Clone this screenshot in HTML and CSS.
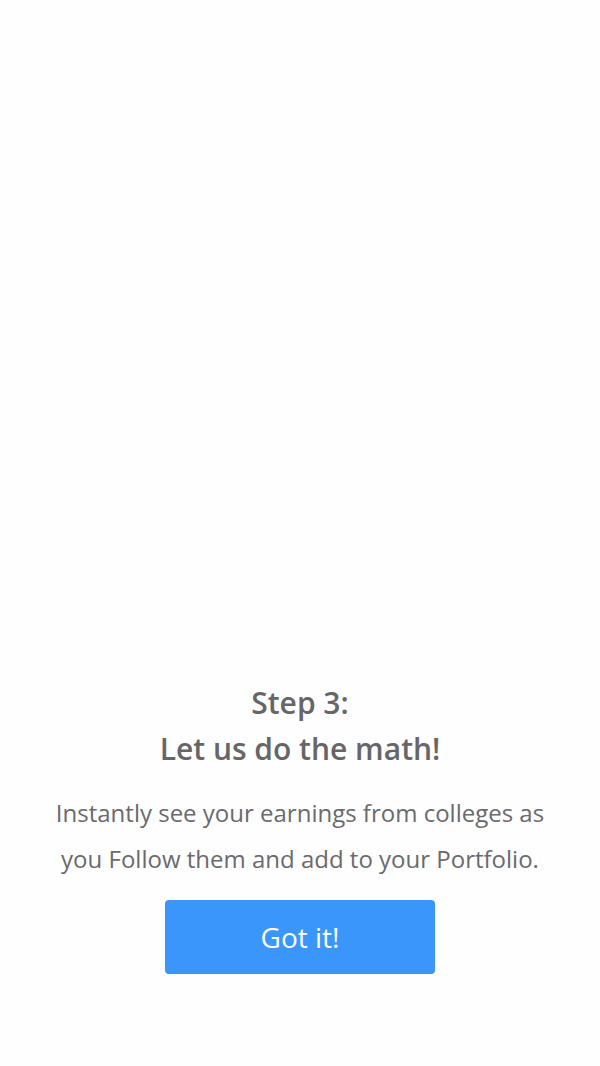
FILE: index.html
```html
<!DOCTYPE html>
<html>
<head>
<meta charset="utf-8">
<link rel="stylesheet" href="styles.css">
</head>
<body>
<main class="screen">
  <section class="card">
    <h1 class="title">Step 3:<br>Let us do the math!</h1>
    <p class="desc">Instantly see your earnings from colleges as you Follow them and add to your Portfolio.</p>
    <button class="btn">Got it!</button>
  </section>
</main>
</body>
</html>
```
FILE: styles.css
```css
html, body {
  margin: 0;
  padding: 0;
  background: #fefefe;
}
.screen {
  width: 600px;
  height: 1066px;
  display: flex;
  flex-direction: column;
  justify-content: flex-end;
  align-items: center;
}
.card {
  display: flex;
  flex-direction: column;
  align-items: center;
  padding-bottom: 92px;
}
.title {
  margin: 0;
  font-family: "Open Sans", sans-serif;
  font-weight: 600;
  font-size: 30px;
  line-height: 46px;
  color: #666668;
  text-align: center;
}
.desc {
  margin: 18px 0 0;
  width: 510px;
  font-family: "Open Sans", sans-serif;
  font-size: 24px;
  line-height: 46px;
  color: #6a6a6c;
  text-align: center;
}
.btn {
  margin-top: 18px;
  width: 270px;
  height: 74px;
  border: none;
  border-radius: 4px;
  background: #3a96fb;
  color: #ffffff;
  font-family: "Open Sans", sans-serif;
  font-size: 28px;
}
```
